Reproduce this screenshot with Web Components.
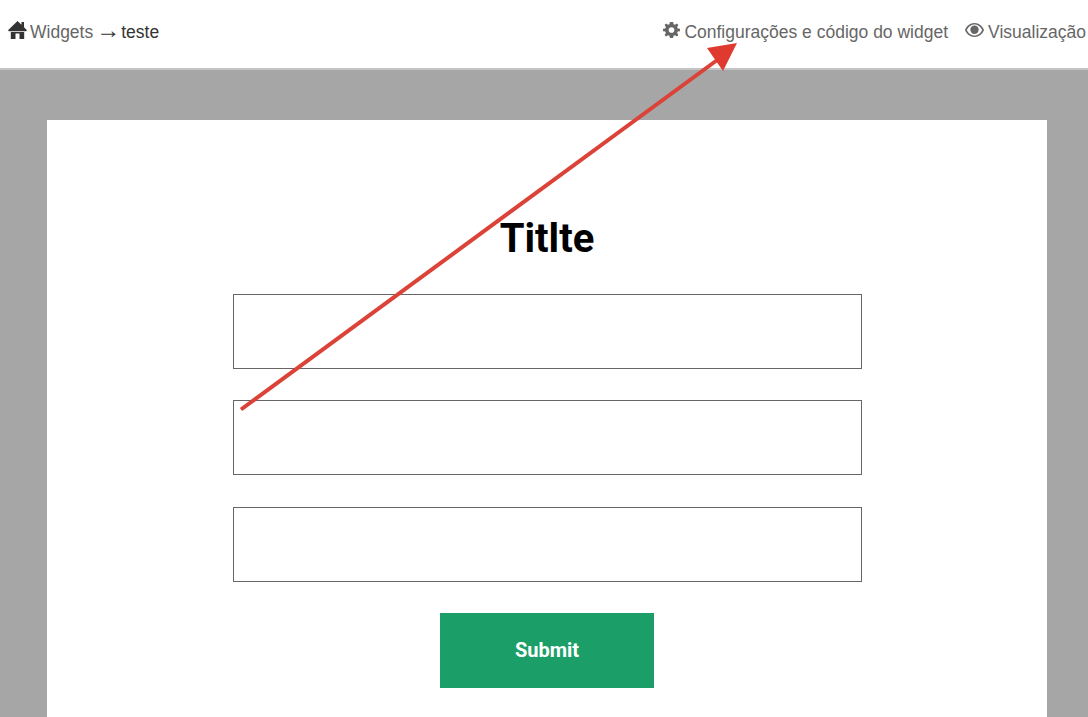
<!DOCTYPE html>
<html lang="pt">
<head>
<meta charset="utf-8">
<title>Widgets</title>
<style>
  html, body { margin: 0; height: 100%; overflow: hidden; background: #a6a6a6; }
  .crumb { color: #333; }
  .crumb b { font-weight: 400; font-size: 24px; line-height: 0; margin: 0 1px 0 3px; }
</style>
</head>
<body>
<widget-page>
  <top-bar slot="bar">
    <nav-link slot="left" icon="home" tone="dark">Widgets<span class="crumb"><b>→</b>teste</span></nav-link>
    <nav-link slot="right" icon="gear">Configurações e código do widget</nav-link>
    <nav-link slot="right" icon="eye">Visualização</nav-link>
  </top-bar>
  <form-card slot="card" heading="Titlte" action="Submit"></form-card>
  <arrow-note slot="note"></arrow-note>
</widget-page>

<script>
/********************************* WidgetPage ******************************************/
let pageTmpl = document.createElement('template');
pageTmpl.innerHTML = `
  <style>
    :host { display: block; position: relative; height: 717px; overflow: hidden; font-family: "Liberation Sans", Arial, sans-serif; }
    main { padding: 50px 41px 0 47px; }
  </style>
  <slot name="bar"></slot>
  <main><slot name="card"></slot></main>
  <slot name="note"></slot>`;

class WidgetPage extends HTMLElement {
  constructor() {
    super();
    this.attachShadow({ mode: 'open' });
    this.shadowRoot.appendChild(pageTmpl.content.cloneNode(true));
  }
}
customElements.define('widget-page', WidgetPage);

/********************************* TopBar ******************************************/
let barTmpl = document.createElement('template');
barTmpl.innerHTML = `
  <style>
    :host { display: flex; justify-content: space-between; align-items: center; box-sizing: border-box; height: 70px; padding: 0 2px 4px 8px; background: #fff; border-bottom: 2px solid #c4c4c4; white-space: nowrap; }
    div { display: flex; align-items: center; gap: 17px; }
  </style>
  <div><slot name="left"></slot></div>
  <div><slot name="right"></slot></div>`;

class TopBar extends HTMLElement {
  constructor() {
    super();
    this.attachShadow({ mode: 'open' });
    this.shadowRoot.appendChild(barTmpl.content.cloneNode(true));
  }
}
customElements.define('top-bar', TopBar);

/********************************* NavLink ******************************************/
const ICONS = {
  home: '<svg width="19" height="18" viewBox="0 0 19 18"><path d="M9.500 0 L13.500 3.800 V1 H16 V6.200 L19 9.200 L18 10.200 H0.900 L0 9.200 Z M2.800 11 H16.200 V18 H11.500 V12.500 H7.500 V18 H2.800 Z"/></svg>',
  gear: '<svg width="17" height="16" viewBox="0 0 18 17"><path fill-rule="evenodd" d="M7.300 0 H10.700 L11.200 2.400 L12.700 3 L14.800 1.700 L16.300 3.200 L15 5.300 L15.600 6.800 L18 7.200 V9.800 L15.600 10.200 L15 11.700 L16.300 13.800 L14.800 15.300 L12.700 14 L11.200 14.600 L10.700 17 H7.300 L6.800 14.600 L5.300 14 L3.200 15.300 L1.700 13.800 L3 11.700 L2.400 10.200 L0 9.800 V7.200 L2.400 6.800 L3 5.300 L1.700 3.200 L3.200 1.700 L5.300 3 L6.800 2.400 Z M9 5.500 A3 3 0 1 0 9 11.500 A3 3 0 1 0 9 5.500 Z"/></svg>',
  eye: '<svg width="19" height="14" viewBox="0 0 19 14"><path fill-rule="evenodd" d="M9.500 0 C14 0 17.500 3 19 7 C17.500 11 14 14 9.500 14 C5 14 1.500 11 0 7 C1.500 3 5 0 9.500 0 Z M9.500 1.500 C5.800 1.500 3.200 4 1.800 7 C3.200 10 5.800 12.500 9.500 12.500 C13.200 12.500 15.800 10 17.200 7 C15.800 4 13.200 1.500 9.500 1.500 Z"/><circle cx="9.500" cy="6.800" r="4.200"/></svg>'
};

let linkTmpl = document.createElement('template');
linkTmpl.innerHTML = `
  <style>
    :host { display: inline-flex; align-items: center; gap: 4px; font-size: 17.5px; color: #666; }
    #icon { display: flex; position: relative; top: -2px; fill: #666; }
    :host([tone="dark"]) #icon { fill: #333; }
    :host([icon="home"]) { gap: 3px; }
  </style>
  <span id="icon"></span>
  <span><slot></slot></span>`;

class NavLink extends HTMLElement {
  constructor() {
    super();
    this.attachShadow({ mode: 'open' });
    this.shadowRoot.appendChild(linkTmpl.content.cloneNode(true));
  }

  connectedCallback() {
    this.shadowRoot.querySelector('#icon').innerHTML = ICONS[this.getAttribute('icon')] || '';
  }
}
customElements.define('nav-link', NavLink);

/********************************* FormCard ******************************************/
let cardTmpl = document.createElement('template');
cardTmpl.innerHTML = `
  <style>
    :host { display: flex; flex-direction: column; align-items: center; box-sizing: border-box; width: 1000px; height: 620px; padding-top: 95px; background: #fff; font-family: Roboto, "Liberation Sans", sans-serif; }
    h1 { margin: 0 0 31px; font-size: 40px; line-height: 48px; font-weight: 700; color: #000; }
    form { display: flex; flex-direction: column; align-items: center; gap: 31px; }
    input { display: block; box-sizing: border-box; width: 629px; height: 75px; padding: 0 16px; border: 1px solid #666; border-radius: 0; background: #fff; outline: 0; }
    input:nth-of-type(3) { margin-top: 1px; }
    button { width: 214px; height: 75px; padding: 0 0 2px; border: 0; border-radius: 0; background: #1b9e67; color: #fff; font: 700 20px Roboto, "Liberation Sans", sans-serif; }
  </style>
  <h1></h1>
  <form>
    <input type="text" aria-label="Campo 1">
    <input type="text" aria-label="Campo 2">
    <input type="text" aria-label="Campo 3">
    <button type="button"></button>
  </form>`;

class FormCard extends HTMLElement {
  constructor() {
    super();
    this.attachShadow({ mode: 'open' });
    this.shadowRoot.appendChild(cardTmpl.content.cloneNode(true));
  }

  connectedCallback() {
    this.shadowRoot.querySelector('h1').textContent = this.getAttribute('heading');
    this.shadowRoot.querySelector('button').textContent = this.getAttribute('action');
  }
}
customElements.define('form-card', FormCard);

/********************************* ArrowNote ******************************************/
// Annotation drawn over the screenshot, so it sits on the page as a free overlay
let arrowTmpl = document.createElement('template');
arrowTmpl.innerHTML = `
  <style>
    :host { position: absolute; left: 0; top: 0; width: 1088px; height: 717px; pointer-events: none; }
    svg { display: block; }
  </style>
  <svg width="1088" height="717" viewBox="0 0 1088 717">
    <line x1="241" y1="409.500" x2="722" y2="56.500" stroke="#db4238" stroke-width="4"/>
    <path d="M737 43 L707 48 L723 71 Z" fill="#e0392f"/>
  </svg>`;

class ArrowNote extends HTMLElement {
  constructor() {
    super();
    this.attachShadow({ mode: 'open' });
    this.shadowRoot.appendChild(arrowTmpl.content.cloneNode(true));
  }
}
customElements.define('arrow-note', ArrowNote);
</script>
</body>
</html>
